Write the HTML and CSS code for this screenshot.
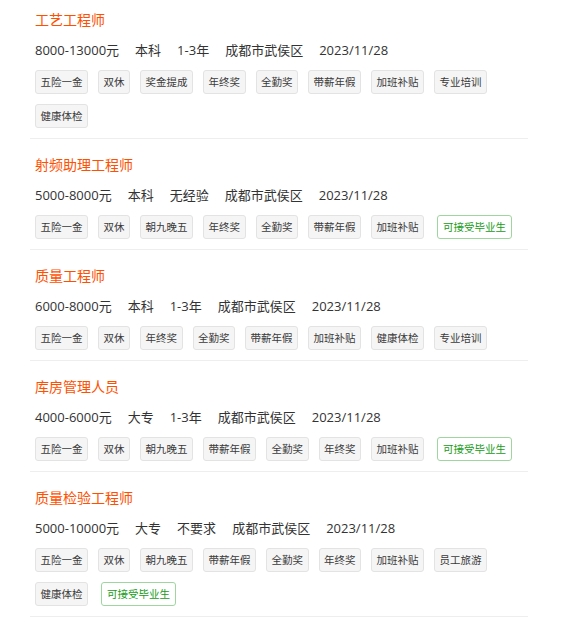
FILE: index.html
```html
<!DOCTYPE html>
<html lang="zh-CN">
<head>
<meta charset="utf-8">
<title>职位列表</title>
<link rel="stylesheet" href="styles.css">
</head>
<body>
<ul class="job-list">
  <li class="job">
    <div class="job-title">工艺工程师</div>
    <div class="job-info"><span>8000-13000元</span><span>本科</span><span>1-3年</span><span>成都市武侯区</span><span>2023/11/28</span></div>
    <div class="tags">
      <span class="tag">五险一金</span><span class="tag">双休</span><span class="tag">奖金提成</span><span class="tag">年终奖</span><span class="tag">全勤奖</span><span class="tag">带薪年假</span><span class="tag">加班补贴</span><span class="tag">专业培训</span><span class="tag">健康体检</span>
    </div>
  </li>
  <li class="job">
    <div class="job-title">射频助理工程师</div>
    <div class="job-info"><span>5000-8000元</span><span>本科</span><span>无经验</span><span>成都市武侯区</span><span>2023/11/28</span></div>
    <div class="tags">
      <span class="tag">五险一金</span><span class="tag">双休</span><span class="tag">朝九晚五</span><span class="tag">年终奖</span><span class="tag">全勤奖</span><span class="tag">带薪年假</span><span class="tag">加班补贴</span><span class="tag tag-green">可接受毕业生</span>
    </div>
  </li>
  <li class="job">
    <div class="job-title">质量工程师</div>
    <div class="job-info"><span>6000-8000元</span><span>本科</span><span>1-3年</span><span>成都市武侯区</span><span>2023/11/28</span></div>
    <div class="tags">
      <span class="tag">五险一金</span><span class="tag">双休</span><span class="tag">年终奖</span><span class="tag">全勤奖</span><span class="tag">带薪年假</span><span class="tag">加班补贴</span><span class="tag">健康体检</span><span class="tag">专业培训</span>
    </div>
  </li>
  <li class="job">
    <div class="job-title">库房管理人员</div>
    <div class="job-info"><span>4000-6000元</span><span>大专</span><span>1-3年</span><span>成都市武侯区</span><span>2023/11/28</span></div>
    <div class="tags">
      <span class="tag">五险一金</span><span class="tag">双休</span><span class="tag">朝九晚五</span><span class="tag">带薪年假</span><span class="tag">全勤奖</span><span class="tag">年终奖</span><span class="tag">加班补贴</span><span class="tag tag-green">可接受毕业生</span>
    </div>
  </li>
  <li class="job">
    <div class="job-title">质量检验工程师</div>
    <div class="job-info"><span>5000-10000元</span><span>大专</span><span>不要求</span><span>成都市武侯区</span><span>2023/11/28</span></div>
    <div class="tags">
      <span class="tag">五险一金</span><span class="tag">双休</span><span class="tag">朝九晚五</span><span class="tag">带薪年假</span><span class="tag">全勤奖</span><span class="tag">年终奖</span><span class="tag">加班补贴</span><span class="tag">员工旅游</span><span class="tag">健康体检</span><span class="tag tag-green">可接受毕业生</span>
    </div>
  </li>
</ul>
</body>
</html>
```

FILE: styles.css
```css
* { box-sizing: border-box; }
html, body {
  margin: 0;
  padding: 0;
  background: #fff;
}
body {
  font-family: "Noto Sans CJK SC", "Noto Sans", sans-serif;
  color: #333;
}
.job-list {
  list-style: none;
  margin: 0 0 0 30px;
  padding: 0;
  width: 498px;
}
.job {
  padding: 15px 5px 0 5px;
  border-bottom: 1px solid #eee;
}
.job:first-child {
  padding-top: 9px;
}
.job-title {
  font-size: 14px;
  line-height: 21px;
  color: #ff5000;
}
.job-info {
  margin-top: 10px;
  font-family: "Open Sans", "Noto Sans CJK SC", sans-serif;
  font-size: 13px;
  line-height: 20px;
  color: #333;
  display: flex;
}
.job-info span {
  margin-right: 16px;
}
.tags {
  margin-top: 10px;
  display: flex;
  flex-wrap: wrap;
}
.tag {
  font-size: 10.5px;
  line-height: 22px;
  padding: 0 4.5px;
  border: 1px solid #e3e3e3;
  background: #f5f5f5;
  border-radius: 3px;
  color: #3a3a3a;
  margin: 0 10px 10px 0;
}
.tag-green {
  margin-left: 3px;
  padding: 0 5px;
  background: #fff;
  border-color: #9fd69f;
  color: #179b17;
}
```
